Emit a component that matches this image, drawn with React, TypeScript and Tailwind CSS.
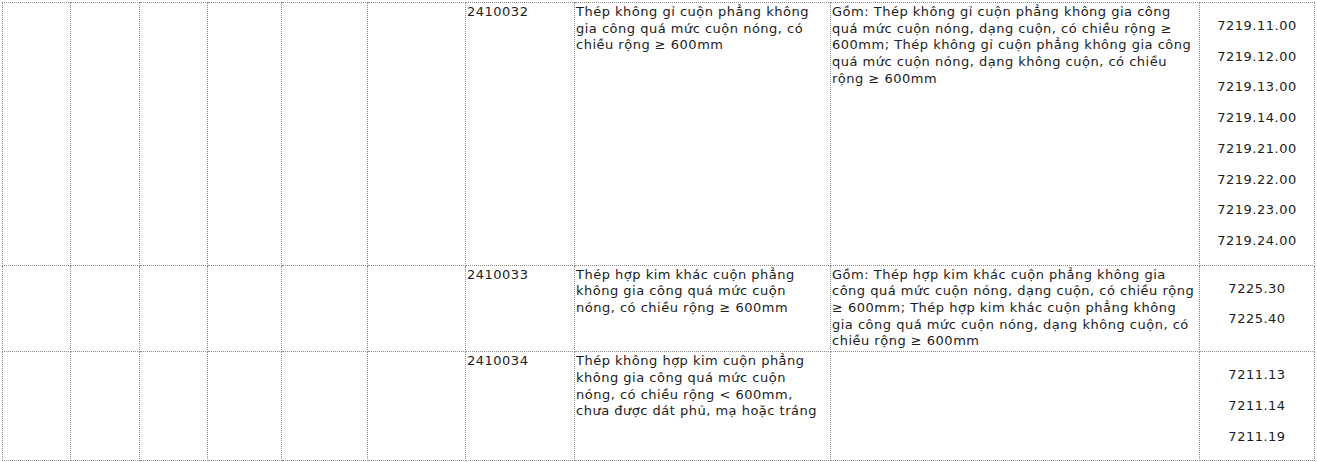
import React from "react";

interface Row {
  code: string;
  name: string[];
  detail: string[];
  hs: string[];
}

const rows: Row[] = [
  {
    code: "2410032",
    name: [
      "Thép không gỉ cuộn phẳng không",
      "gia công quá mức cuộn nóng, có",
      "chiều rộng ≥ 600mm",
    ],
    detail: [
      "Gồm: Thép không gỉ cuộn phẳng không gia công",
      "quá mức cuộn nóng, dạng cuộn, có chiều rộng ≥",
      "600mm; Thép không gỉ cuộn phẳng không gia công",
      "quá mức cuộn nóng, dạng không cuộn, có chiều",
      "rộng ≥ 600mm",
    ],
    hs: [
      "7219.11.00",
      "7219.12.00",
      "7219.13.00",
      "7219.14.00",
      "7219.21.00",
      "7219.22.00",
      "7219.23.00",
      "7219.24.00",
    ],
  },
  {
    code: "2410033",
    name: [
      "Thép hợp kim khác cuộn phẳng",
      "không gia công quá mức cuộn",
      "nóng, có chiều rộng ≥ 600mm",
    ],
    detail: [
      "Gồm: Thép hợp kim khác cuộn phẳng không gia",
      "công quá mức cuộn nóng, dạng cuộn, có chiều rộng",
      "≥ 600mm; Thép hợp kim khác cuộn phẳng không",
      "gia công quá mức cuộn nóng, dạng không cuộn, có",
      "chiều rộng ≥ 600mm",
    ],
    hs: ["7225.30", "7225.40"],
  },
  {
    code: "2410034",
    name: [
      "Thép không hợp kim cuộn phẳng",
      "không gia công quá mức cuộn",
      "nóng, có chiều rộng < 600mm,",
      "chưa được dát phủ, mạ hoặc tráng",
    ],
    detail: [],
    hs: ["7211.13", "7211.14", "7211.19"],
  },
];

// widths between the dotted grid lines
const widths = [68, 69, 68, 74, 86, 98, 109, 256, 369, 115];

const cell = "border border-dotted border-[#8c8c8c] align-top p-[1px]";

const Lines: React.FC<{ lines: string[] }> = ({ lines }) => (
  <>
    {lines.map((l, i) => (
      <div key={i} className="whitespace-nowrap overflow-visible">
        {l}
      </div>
    ))}
  </>
);

export default function App() {
  return (
    <div className="bg-white w-[1317px] h-[462px] overflow-hidden pl-[2px] pt-[2px]">
      <table
        className="table-fixed border-collapse text-[13px] leading-[16.7px] tracking-[0.5px] text-[#1c1c1c]"
        style={{ fontFamily: '"DejaVu Sans", Verdana, sans-serif', width: 1312 }}
      >
        <colgroup>
          {widths.map((w, i) => (
            <col key={i} style={{ width: w }} />
          ))}
        </colgroup>
        <tbody>
          {rows.map((r) => (
            <tr key={r.code}>
              <td className={cell}></td>
              <td className={cell}></td>
              <td className={cell}></td>
              <td className={cell}></td>
              <td className={cell}></td>
              <td className={cell}></td>
              <td className={cell}>{r.code}</td>
              <td className={cell}>
                <Lines lines={r.name} />
              </td>
              <td className={cell}>
                <Lines lines={r.detail} />
              </td>
              <td className={cell + " text-center"}>
                <div className="py-[14px] flex flex-col gap-[14px]">
                  {r.hs.map((h) => (
                    <div key={h}>{h}</div>
                  ))}
                </div>
              </td>
            </tr>
          ))}
        </tbody>
      </table>
    </div>
  );
}
